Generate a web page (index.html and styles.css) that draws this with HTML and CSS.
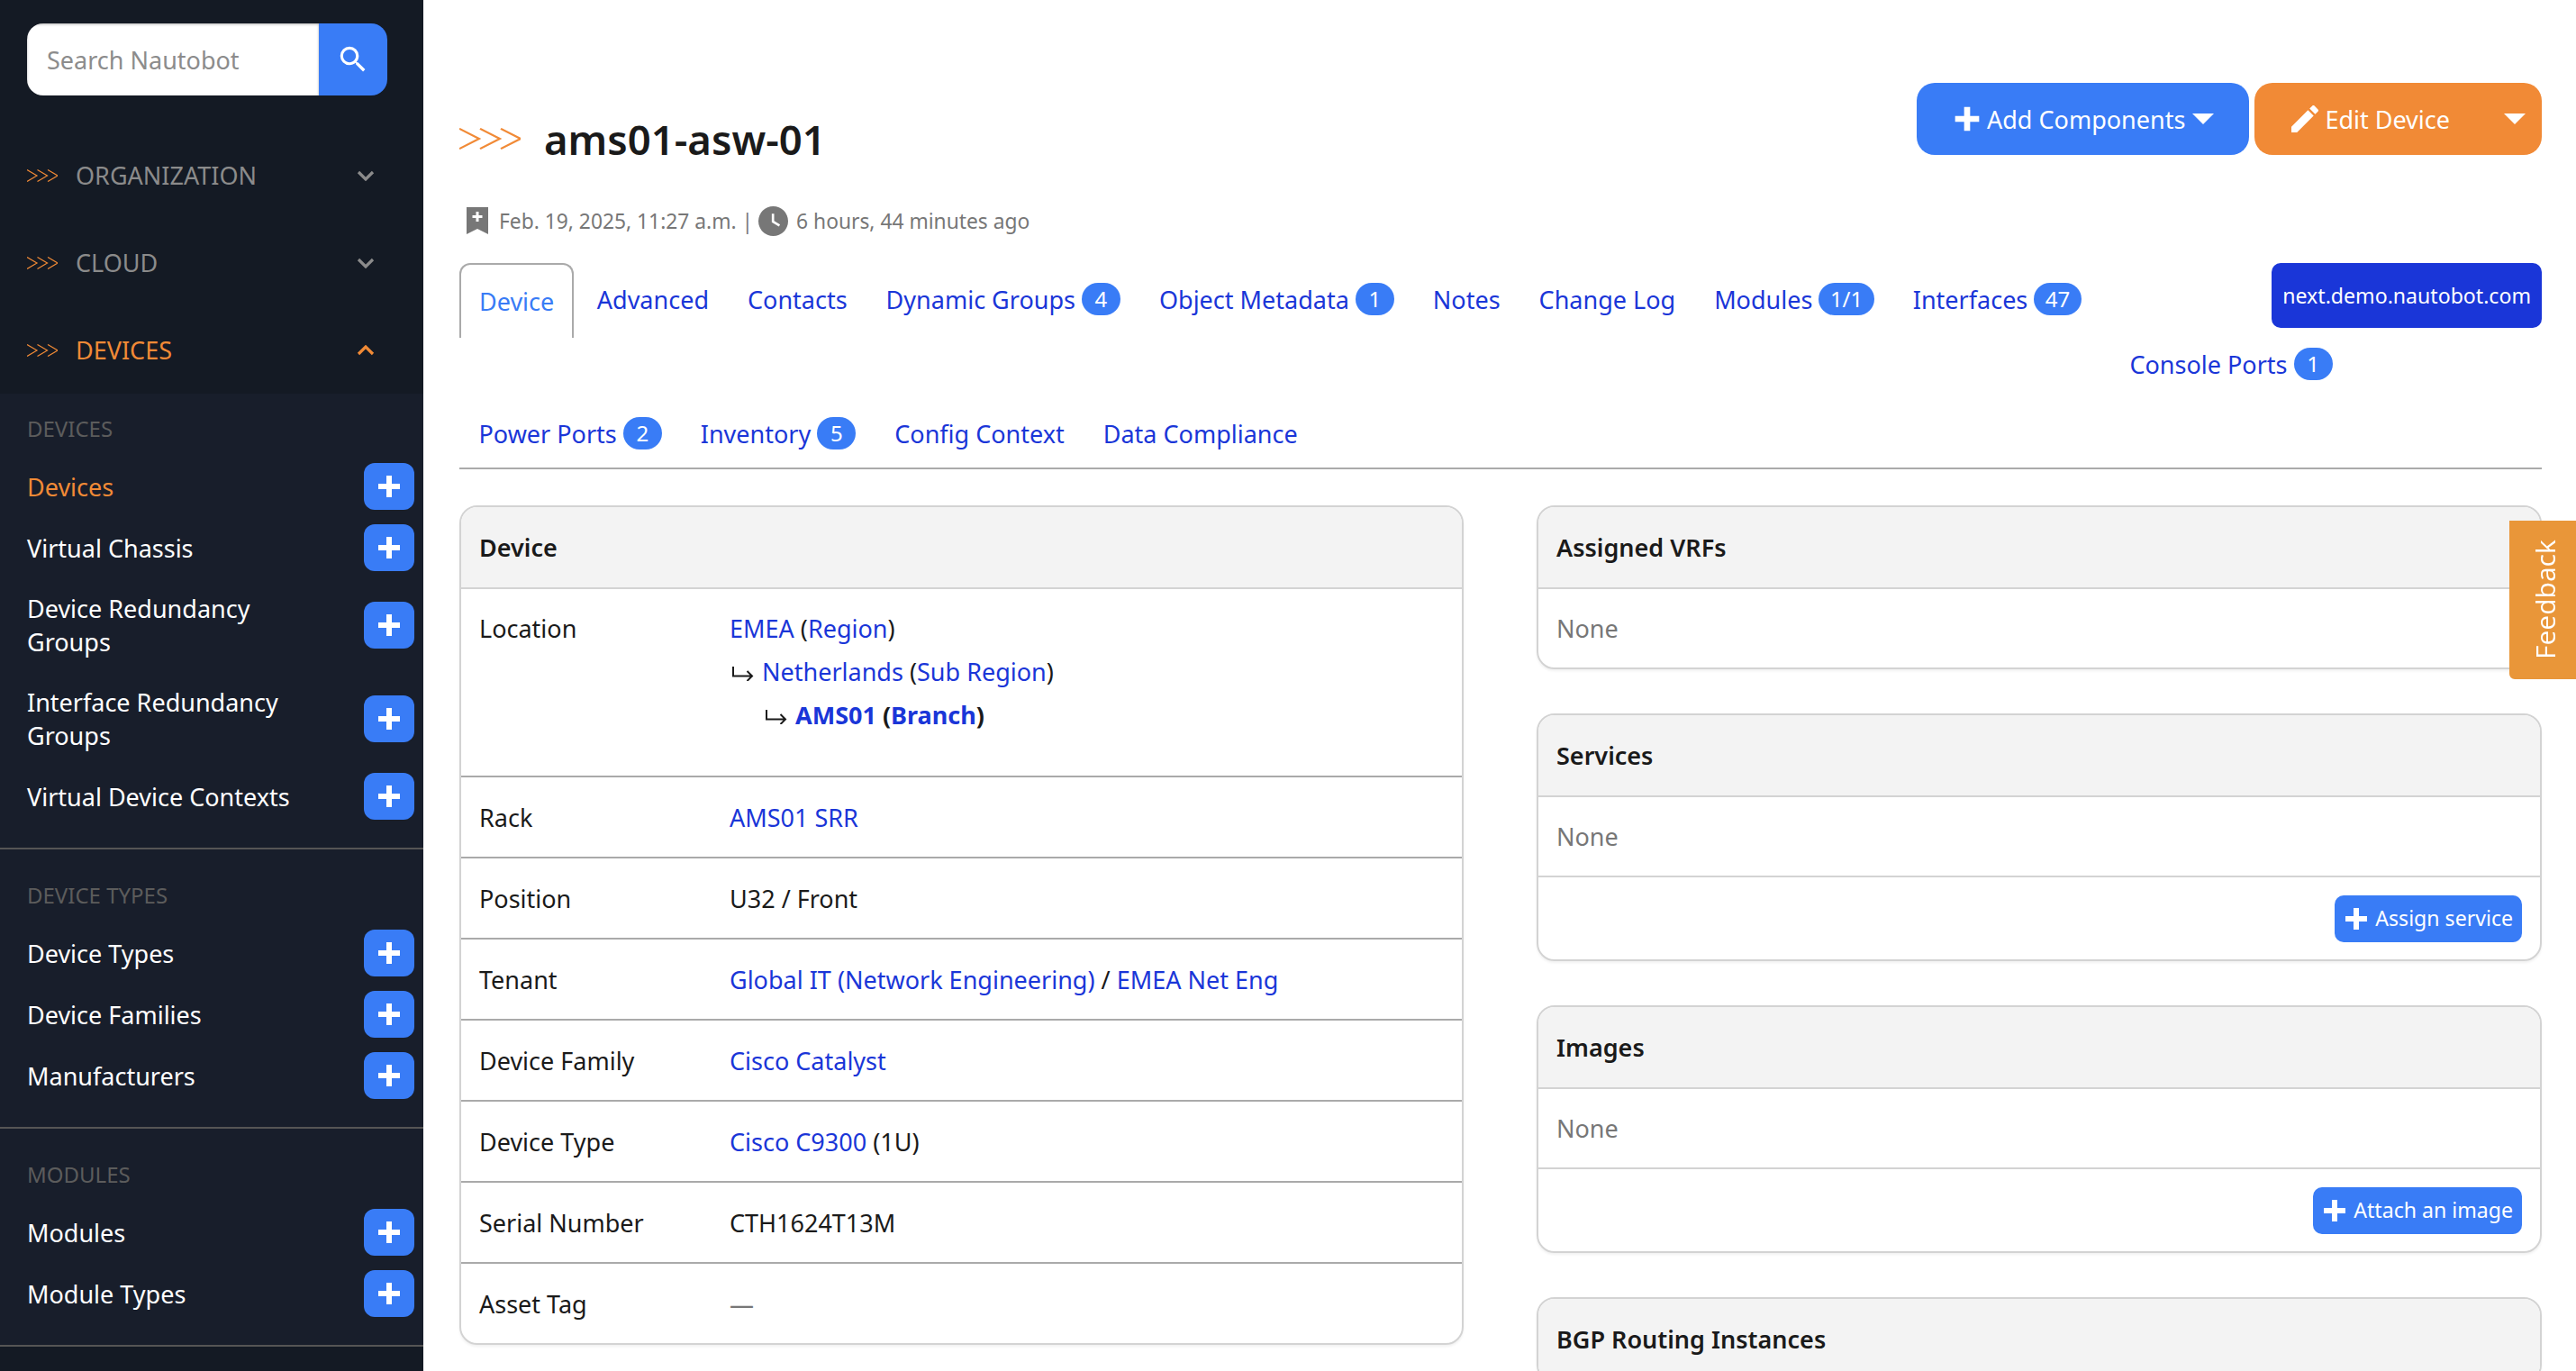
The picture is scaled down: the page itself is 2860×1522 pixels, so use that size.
FILE: index.html
```html
<!doctype html>
<html lang="en">
<head>
    <meta charset="utf-8">
    <meta name="viewport" content="width=device-width, initial-scale=1">
    <title>ams01-asw-01 - Nautobot</title>
    <link rel="stylesheet" href="styles.css">
</head>
<body>
<svg class="icon-defs" aria-hidden="true">
    <symbol id="i-plus" viewBox="0 0 24 24"><path d="M20 14H14V20H10V14H4V10H10V4H14V10H20V14Z"/></symbol>
    <symbol id="i-pencil" viewBox="0 0 24 24"><path d="M20.71,7.04C21.1,6.65 21.1,6 20.71,5.63L18.37,3.29C18,2.9 17.35,2.9 16.96,3.29L15.12,5.12L18.87,8.87M3,17.25V21H6.75L17.81,9.93L14.06,6.18L3,17.25Z"/></symbol>
    <symbol id="i-search" viewBox="0 0 24 24"><path d="M9.5,3A6.5,6.5 0 0,1 16,9.5C16,11.11 15.41,12.59 14.44,13.73L14.71,14H15.5L20.5,19L19,20.5L14,15.5V14.71L13.73,14.44C12.59,15.41 11.11,16 9.5,16A6.5,6.5 0 0,1 3,9.5A6.5,6.5 0 0,1 9.5,3M9.5,5C7,5 5,7 5,9.5C5,12 7,14 9.5,14C12,14 14,12 14,9.5C14,7 12,5 9.5,5Z"/></symbol>
    <symbol id="i-arrows" viewBox="0 0 34 14" preserveAspectRatio="none"><path d="M0 0.5L11 7L0 13.5M11.5 0.5L22.5 7L11.5 13.5M23 0.5L34 7L23 13.5" fill="none" stroke="currentColor" stroke-width="1.2"/></symbol>
    <symbol id="i-down" viewBox="0 0 20 12"><path d="M2 2L10 10L18 2" fill="none" stroke="currentColor" stroke-width="3.2"/></symbol>
    <symbol id="i-up" viewBox="0 0 20 12"><path d="M2 10L10 2L18 10" fill="none" stroke="currentColor" stroke-width="3.2"/></symbol>
    <symbol id="i-hook" viewBox="0 0 24 16"><path d="M1 0V10.5H22M16.5 5L22 10.5L16.5 16" fill="none" stroke="currentColor" stroke-width="2"/></symbol>
</svg>

<div class="layout">
    <aside class="sidebar">
        <form class="search">
            <input class="search-input" type="text" placeholder="Search Nautobot">
            <button class="search-btn" type="button"><svg class="icon-search"><use href="#i-search"/></svg></button>
        </form>

        <div class="nav-head">
            <svg class="nav-arrows"><use href="#i-arrows"/></svg>
            <span class="nav-title">ORGANIZATION</span>
            <svg class="nav-chevron"><use href="#i-down"/></svg>
        </div>
        <div class="nav-head">
            <svg class="nav-arrows"><use href="#i-arrows"/></svg>
            <span class="nav-title">CLOUD</span>
            <svg class="nav-chevron"><use href="#i-down"/></svg>
        </div>
        <div class="nav-head active">
            <svg class="nav-arrows"><use href="#i-arrows"/></svg>
            <span class="nav-title">DEVICES</span>
            <svg class="nav-chevron"><use href="#i-up"/></svg>
        </div>

        <div class="nav-panel">
            <section class="nav-group">
                <div class="nav-label">DEVICES</div>
                <div class="nav-row current"><a>Devices</a><span class="add-btn"><svg><use href="#i-plus"/></svg></span></div>
                <div class="nav-row"><a>Virtual Chassis</a><span class="add-btn"><svg><use href="#i-plus"/></svg></span></div>
                <div class="nav-row tall"><a>Device Redundancy Groups</a><span class="add-btn"><svg><use href="#i-plus"/></svg></span></div>
                <div class="nav-row tall"><a>Interface Redundancy Groups</a><span class="add-btn"><svg><use href="#i-plus"/></svg></span></div>
                <div class="nav-row"><a>Virtual Device Contexts</a><span class="add-btn"><svg><use href="#i-plus"/></svg></span></div>
            </section>
            <section class="nav-group">
                <div class="nav-label">DEVICE TYPES</div>
                <div class="nav-row"><a>Device Types</a><span class="add-btn"><svg><use href="#i-plus"/></svg></span></div>
                <div class="nav-row"><a>Device Families</a><span class="add-btn"><svg><use href="#i-plus"/></svg></span></div>
                <div class="nav-row"><a>Manufacturers</a><span class="add-btn"><svg><use href="#i-plus"/></svg></span></div>
            </section>
            <section class="nav-group">
                <div class="nav-label">MODULES</div>
                <div class="nav-row"><a>Modules</a><span class="add-btn"><svg><use href="#i-plus"/></svg></span></div>
                <div class="nav-row"><a>Module Types</a><span class="add-btn"><svg><use href="#i-plus"/></svg></span></div>
            </section>
        </div>
    </aside>

    <main class="content">
        <header class="page-head">
            <div class="page-title">
                <h1><svg class="title-arrows"><use href="#i-arrows"/></svg>ams01-asw-01</h1>
                <div class="meta">
                    <svg class="meta-mark" viewBox="0 0 24 30"><path d="M0 0H24V30L12 24L0 30V0ZM10.5 5V9H6.5V12H10.5V16H13.5V12H17.5V9H13.5V5H10.5Z"/></svg>
                    <span>Feb. 19, 2025, 11:27 a.m. |</span>
                    <svg class="meta-clock" viewBox="2 2 20 20"><path d="M12,2A10,10 0 0,0 2,12A10,10 0 0,0 12,22A10,10 0 0,0 22,12A10,10 0 0,0 12,2M15.8,15.6L11,12.7V7H12.6V11.9L16.6,14.3L15.8,15.6Z"/></svg>
                    <span>6 hours, 44 minutes ago</span>
                </div>
            </div>
            <div class="actions">
                <a class="btn btn-blue"><svg class="btn-icon"><use href="#i-plus"/></svg>Add Components<span class="caret"></span></a>
                <a class="btn btn-orange"><svg class="btn-icon"><use href="#i-pencil"/></svg>Edit Device<span class="caret"></span></a>
            </div>
        </header>

        <nav class="tabs">
            <div class="tab-row first">
                <a class="tab active">Device</a>
                <a class="tab">Advanced</a>
                <a class="tab">Contacts</a>
                <a class="tab">Dynamic Groups<span class="badge">4</span></a>
                <a class="tab">Object Metadata<span class="badge">1</span></a>
                <a class="tab">Notes</a>
                <a class="tab">Change Log</a>
                <a class="tab">Modules<span class="badge">1/1</span></a>
                <a class="tab">Interfaces<span class="badge">47</span></a>
                <a class="host-btn">next.demo.nautobot.com</a>
            </div>
            <div class="tab-row second">
                <a class="tab">Console Ports<span class="badge">1</span></a>
            </div>
            <div class="tab-row third">
                <a class="tab">Power Ports<span class="badge">2</span></a>
                <a class="tab">Inventory<span class="badge">5</span></a>
                <a class="tab">Config Context</a>
                <a class="tab">Data Compliance</a>
            </div>
        </nav>

        <div class="columns">
            <section class="card">
                <div class="card-head">Device</div>
                <div class="attr location">
                    <div class="attr-name">Location</div>
                    <div class="attr-value">
                        <div class="tree"><a>EMEA</a> (<a>Region</a>)</div>
                        <div class="tree"><svg class="hook"><use href="#i-hook"/></svg><a>Netherlands</a> (<a>Sub Region</a>)</div>
                        <div class="tree deep"><svg class="hook"><use href="#i-hook"/></svg><strong><a>AMS01</a> (<a>Branch</a>)</strong></div>
                    </div>
                </div>
                <div class="attr"><div class="attr-name">Rack</div><div class="attr-value"><a>AMS01 SRR</a></div></div>
                <div class="attr"><div class="attr-name">Position</div><div class="attr-value">U32 / Front</div></div>
                <div class="attr"><div class="attr-name">Tenant</div><div class="attr-value"><a>Global IT (Network Engineering)</a> / <a>EMEA Net Eng</a></div></div>
                <div class="attr"><div class="attr-name">Device Family</div><div class="attr-value"><a>Cisco Catalyst</a></div></div>
                <div class="attr"><div class="attr-name">Device Type</div><div class="attr-value"><a>Cisco C9300</a> (1U)</div></div>
                <div class="attr"><div class="attr-name">Serial Number</div><div class="attr-value">CTH1624T13M</div></div>
                <div class="attr"><div class="attr-name">Asset Tag</div><div class="attr-value muted">—</div></div>
            </section>

            <div class="side-cards">
                <section class="card">
                    <div class="card-head">Assigned VRFs</div>
                    <div class="card-none">None</div>
                </section>
                <section class="card">
                    <div class="card-head">Services</div>
                    <div class="card-none">None</div>
                    <div class="card-foot"><a class="btn-small"><svg><use href="#i-plus"/></svg>Assign service</a></div>
                </section>
                <section class="card">
                    <div class="card-head">Images</div>
                    <div class="card-none">None</div>
                    <div class="card-foot"><a class="btn-small"><svg><use href="#i-plus"/></svg>Attach an image</a></div>
                </section>
                <section class="card">
                    <div class="card-head">BGP Routing Instances</div>
                </section>
            </div>
        </div>
    </main>
</div>

<a class="feedback">Feedback</a>
</body>
</html>
```

FILE: styles.css
```css
html, body {
    height: 100%;
}

body {
    margin: 0;
    overflow: hidden;
    font-family: "Noto Sans", "Open Sans", sans-serif;
    font-size: 27px;
    line-height: 37px;
    color: #1a1a1a;
    background: #fff;
}

a {
    color: #1a36d8;
    text-decoration: none;
}

.icon-defs {
    display: none;
}

.layout {
    display: flex;
    height: 100%;
}

/* sidebar */
.sidebar {
    flex: 0 0 470px;
    height: 100%;
    overflow: hidden;
    background: #141a24;
}

.search {
    display: flex;
    height: 80px;
    margin: 26px 40px 40px 30px;
    border-radius: 18px;
    overflow: hidden;
}

.search-input {
    flex: 1;
    min-width: 0;
    padding: 0 22px;
    border: 0;
    outline: 0;
    font: inherit;
    box-shadow: inset 0 1px 3px rgba(0, 0, 0, .3);
}

.search-input::placeholder {
    color: #8c8c8c;
    opacity: 1;
}

.search-btn {
    flex: 0 0 76px;
    padding: 0;
    border: 0;
    background: #397cf6;
}

.icon-search {
    display: block;
    width: 38px;
    height: 38px;
    margin: auto;
    fill: #fff;
}

.nav-head {
    display: flex;
    align-items: center;
    height: 97px;
    padding: 0 54px 0 30px;
    color: #8b8b8b;
}

.nav-head.active {
    color: #f18a36;
}

.nav-arrows {
    width: 34px;
    height: 14px;
    color: #f18a36;
}

.nav-title {
    flex: 1;
    margin-left: 20px;
}

.nav-chevron {
    width: 20px;
    height: 12px;
}

.nav-panel {
    background: #181e2b;
}

.nav-group {
    padding: 37px 10px 23px 30px;
    border-bottom: 2px solid #555;
}

.nav-group:first-child {
    padding-top: 25px;
}

.nav-label {
    margin-bottom: 16px;
    font-size: 24px;
    line-height: 28px;
    color: #5c5c5c;
}

.nav-row {
    display: flex;
    align-items: center;
    justify-content: space-between;
    height: 68px;
}

.nav-row.tall {
    height: 104px;
}

.nav-row a {
    max-width: 330px;
    color: #fff;
}

.nav-row.current a {
    color: #f18a36;
}

.add-btn {
    display: flex;
    align-items: center;
    justify-content: center;
    flex: 0 0 56px;
    height: 52px;
    border-radius: 12px;
    background: #397cf6;
}

.add-btn svg {
    width: 36px;
    height: 36px;
    fill: #fff;
}

/* main */
.content {
    flex: 1;
    min-width: 0;
    padding: 92px 38px 0 40px;
}

.page-head {
    display: flex;
    justify-content: space-between;
    align-items: flex-start;
}

.page-title h1 {
    display: flex;
    align-items: center;
    margin: 32px 0 0;
    font-size: 45.5px;
    line-height: 60px;
    font-weight: 600;
}

.title-arrows {
    width: 68px;
    height: 24px;
    margin-right: 26px;
    color: #f18a36;
}

.meta {
    display: flex;
    align-items: center;
    height: 40px;
    margin-top: 41px;
    font-size: 22.8px;
    color: #777;
}

.meta-mark {
    width: 24px;
    height: 30px;
    margin: 0 12px 0 8px;
    fill: #777;
}

.meta-clock {
    width: 33px;
    height: 33px;
    margin: 0 9px 0 6px;
    fill: #777;
}

.actions {
    display: flex;
    gap: 6px;
}

.btn {
    display: flex;
    align-items: center;
    height: 80px;
    border-radius: 20px;
    color: #fff;
}

.btn-blue {
    padding: 0 39px 0 36px;
    background: #397cf6;
}

.btn-orange {
    padding: 0 18px 0 36px;
    background: #f18a36;
}

.btn-icon {
    width: 40px;
    height: 40px;
    margin-right: 2px;
    fill: #fff;
}

.caret {
    width: 0;
    height: 0;
    margin-left: 8px;
    border-style: solid;
    border-width: 12px 12px 0;
    border-color: #fff transparent transparent;
}

.btn-orange .caret {
    margin-left: 60px;
}

.tabs {
    margin-top: 27px;
    border-bottom: 2px solid #aaa;
}

.tab-row {
    display: flex;
    align-items: center;
}

.tab-row.first {
    height: 83px;
}

.tab-row.second {
    justify-content: flex-end;
    height: 58px;
    padding-right: 211px;
}

.tab-row.third {
    height: 76px;
    margin-top: 10px;
}

.tab {
    display: flex;
    align-items: center;
    padding: 0 21.5px;
}

.tab-row.first .tab {
    margin-bottom: 3px;
}

.tab-row.first .tab.active {
    align-self: stretch;
    margin: 0 4px 0 0;
    padding: 0 20px;
    border: 2px solid #aaa;
    border-bottom: 0;
    border-radius: 12px 12px 0 0;
    color: #397cf6;
}

.badge {
    min-width: 18px;
    margin-left: 7px;
    padding: 0 12.5px;
    border-radius: 20px;
    background: #397cf6;
    color: #fff;
    font-size: 24px;
    line-height: 36px;
    text-align: center;
}

.host-btn {
    display: flex;
    align-items: center;
    align-self: flex-start;
    height: 72px;
    margin-left: auto;
    padding: 0 12px;
    border-radius: 10px;
    background: #1a36d8;
    color: #fff;
    font-size: 23.1px;
}

.columns {
    display: grid;
    grid-template-columns: 1115px 1116px;
    gap: 81px;
    align-items: start;
    margin-top: 40px;
}

.card {
    border: 2px solid #d3d3d3;
    border-radius: 20px;
    overflow: hidden;
    box-shadow: 0 2px 3px rgba(0, 0, 0, .06);
}

.card-head {
    display: flex;
    align-items: center;
    height: 89px;
    padding: 0 20px;
    background: #f3f3f3;
    border-bottom: 2px solid #d3d3d3;
    font-weight: 600;
}

.attr {
    display: flex;
    height: 90px;
    align-items: center;
    padding: 0 20px;
    border-top: 2px solid #aaa;
    box-sizing: border-box;
}

.card-head + .attr {
    border-top: 0;
}

.attr.location {
    align-items: flex-start;
    height: 207px;
    padding-top: 20px;
}

.attr-name {
    flex: 0 0 278px;
}

.location .attr-name {
    line-height: 48px;
}

.muted {
    color: #777;
}

.tree {
    height: 48px;
    line-height: 48px;
}

.hook {
    width: 24px;
    height: 16px;
    margin: 0 9px 0 3px;
}

.tree.deep {
    padding-left: 37px;
}

.side-cards {
    display: flex;
    flex-direction: column;
    gap: 49px;
}

.card-none {
    display: flex;
    align-items: center;
    height: 87px;
    padding: 0 20px;
    color: #777;
}

.card-foot {
    display: flex;
    justify-content: flex-end;
    align-items: center;
    height: 91px;
    padding: 0 20px;
    border-top: 2px solid #d3d3d3;
}

.btn-small {
    display: flex;
    align-items: center;
    height: 52px;
    padding: 0 10px 0 6px;
    border-radius: 10px;
    background: #397cf6;
    color: #fff;
    font-size: 23.1px;
}

.btn-small svg {
    width: 36px;
    height: 36px;
    margin-right: 3px;
    fill: #fff;
}

.feedback {
    position: fixed;
    right: 0;
    top: 578px;
    display: flex;
    align-items: center;
    justify-content: center;
    box-sizing: border-box;
    width: 74px;
    height: 176px;
    padding-right: 6px;
    border-radius: 0 6px 0 0;
    background: #e99639;
    color: #fff;
    font-family: "Open Sans", sans-serif;
    font-size: 30px;
    writing-mode: vertical-rl;
    transform: rotate(180deg);
}
```
